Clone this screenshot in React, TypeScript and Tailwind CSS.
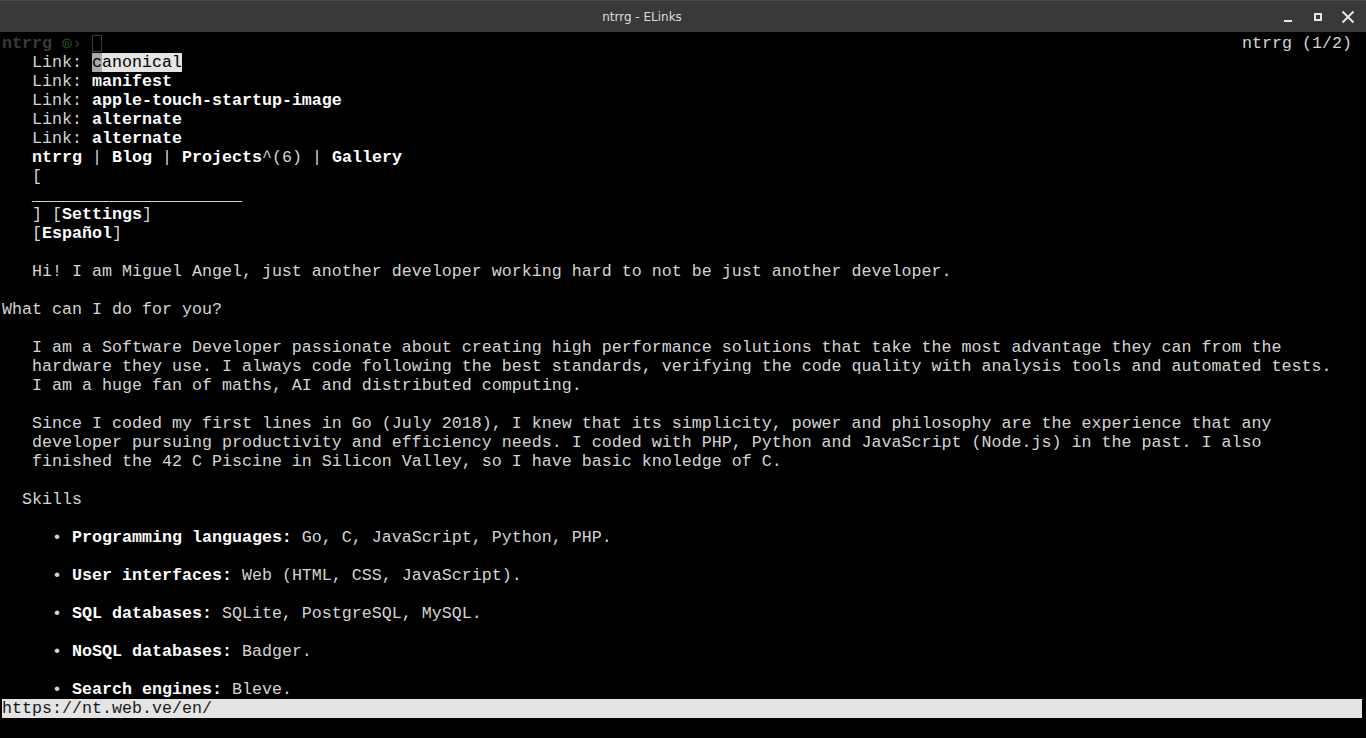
import React from "react";

const B = ({ children }: { children: React.ReactNode }) => (
  <span className="font-bold text-white">{children}</span>
);

const Row = ({ children, className = "" }: { children?: React.ReactNode; className?: string }) => (
  <div className={`h-[19px] leading-[19px] whitespace-pre ${className}`}>{children ?? " "}</div>
);

export default function App() {
  return (
    <div className="w-[1366px] h-[738px] bg-black overflow-hidden flex flex-col">
      {/* title bar */}
      <div className="h-[32px] shrink-0 bg-[#393939] border-t border-[#4a4a4a] flex items-center relative">
        <div className="flex-1 text-center text-[12px] text-[#dedede] font-['DejaVu_Sans',sans-serif] pl-[4px]">
          ntrrg - ELinks
        </div>
        <div className="flex items-center gap-[14px] pr-[10px] text-[#e0e0e0]">
          <svg width="16" height="16" viewBox="0 0 16 16">
            <rect x="4" y="11" width="8" height="2" fill="#e6e6e6" />
          </svg>
          <svg width="16" height="16" viewBox="0 0 16 16">
            <rect x="5" y="5" width="6" height="6" fill="none" stroke="#e6e6e6" strokeWidth="2" />
          </svg>
          <svg width="16" height="16" viewBox="0 0 16 16">
            <path d="M2.5 2.5 L13.5 13.5 M13.5 2.5 L2.5 13.5" stroke="#e6e6e6" strokeWidth="2" />
          </svg>
        </div>
      </div>

      {/* terminal */}
      <div className="flex-1 pt-[2px] pl-[2px] text-[16.667px] text-[#d4d4d4] font-['Liberation_Mono',monospace]">
        <div className="h-[19px] leading-[19px] whitespace-pre flex justify-between pr-[14px]">
          <span className="flex items-center">
            <span className="text-[#3a3a3a] font-bold">ntrrg </span>
            <svg width="10" height="11" viewBox="0 0 10 11">
              <circle cx="5" cy="5.5" r="4.3" fill="none" stroke="#1f4a1f" strokeWidth="1.2" />
              <path d="M3.6 8 V3.6 M3.6 4.6 Q5 2.9 6.4 4.6 V8" fill="none" stroke="#1f4a1f" strokeWidth="1.1" />
            </svg>
            <span className="text-[#3a3a3a]">› </span>
            <span className="inline-block w-[10px] h-[17px] border border-[#3a3a3a]" />
          </span>
          <span className="text-[#d4d4d4]">ntrrg (1/2)</span>
        </div>
        <Row>
          {"   Link: "}
          <span className="bg-[#a9a9a9] text-black">c</span>
          <span className="bg-[#e4e4e4] text-black">anonical</span>
        </Row>
        <Row>{"   Link: "}<B>manifest</B></Row>
        <Row>{"   Link: "}<B>apple-touch-startup-image</B></Row>
        <Row>{"   Link: "}<B>alternate</B></Row>
        <Row>{"   Link: "}<B>alternate</B></Row>
        <Row>
          {"   "}<B>ntrrg</B>{" | "}<B>Blog</B>{" | "}<B>Projects</B>{"^(6) | "}<B>Gallery</B>
        </Row>
        <Row>{"   ["}</Row>
        <Row>{"   _____________________"}</Row>
        <Row>{"   ] ["}<B>Settings</B>{"]"}</Row>
        <Row>{"   ["}<B>Español</B>{"]"}</Row>
        <Row />
        <Row>{"   Hi! I am Miguel Angel, just another developer working hard to not be just another developer."}</Row>
        <Row />
        <Row>{"What can I do for you?"}</Row>
        <Row />
        <Row>{"   I am a Software Developer passionate about creating high performance solutions that take the most advantage they can from the"}</Row>
        <Row>{"   hardware they use. I always code following the best standards, verifying the code quality with analysis tools and automated tests."}</Row>
        <Row>{"   I am a huge fan of maths, AI and distributed computing."}</Row>
        <Row />
        <Row>{"   Since I coded my first lines in Go (July 2018), I knew that its simplicity, power and philosophy are the experience that any"}</Row>
        <Row>{"   developer pursuing productivity and efficiency needs. I coded with PHP, Python and JavaScript (Node.js) in the past. I also"}</Row>
        <Row>{"   finished the 42 C Piscine in Silicon Valley, so I have basic knoledge of C."}</Row>
        <Row />
        <Row>{"  Skills"}</Row>
        <Row />
        <Row>{"     • "}<B>Programming languages:</B>{" Go, C, JavaScript, Python, PHP."}</Row>
        <Row />
        <Row>{"     • "}<B>User interfaces:</B>{" Web (HTML, CSS, JavaScript)."}</Row>
        <Row />
        <Row>{"     • "}<B>SQL databases:</B>{" SQLite, PostgreSQL, MySQL."}</Row>
        <Row />
        <Row>{"     • "}<B>NoSQL databases:</B>{" Badger."}</Row>
        <Row />
        <Row>{"     • "}<B>Search engines:</B>{" Bleve."}</Row>
        <div className="h-[19px] leading-[19px] whitespace-pre w-[1360px] bg-[#e4e4e4] text-[#1a1a1a]">
          https://nt.web.ve/en/
        </div>
      </div>
    </div>
  );
}
